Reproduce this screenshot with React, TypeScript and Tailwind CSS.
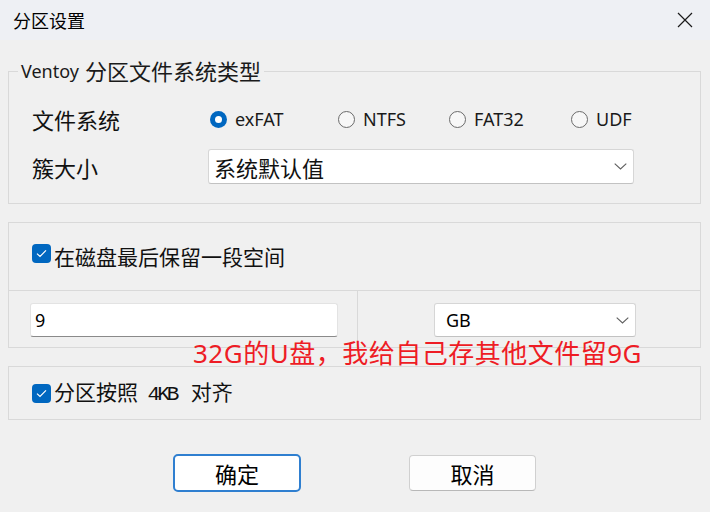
import React from "react";

function Chevron() {
  return (
    <svg width="13" height="7" viewBox="0 0 13 7" fill="none">
      <path d="M0.7 0.7L6.5 6L12.3 0.7" stroke="#5f5f5f" strokeWidth="1.1" />
    </svg>
  );
}

function Radio({ checked, label, w }: { checked?: boolean; label: string; w: string }) {
  return (
    <div className={`flex items-center ${w}`}>
      {checked ? (
        <span className="w-[17px] h-[17px] rounded-full bg-[#0067c0] flex items-center justify-center">
          <span className="w-[7px] h-[7px] rounded-full bg-white" />
        </span>
      ) : (
        <span className="w-[17px] h-[17px] rounded-full border border-[#6b6b6b] bg-[#f7f7f7]" />
      )}
      <span className="ml-[8px] text-[18px] leading-none text-[#1a1a1a] font-['Noto_Sans',sans-serif]">
        {label}
      </span>
    </div>
  );
}

function Check() {
  return (
    <span className="w-[19px] h-[19px] rounded-[4px] bg-[#0067c0] flex items-center justify-center shrink-0">
      <svg width="11" height="9" viewBox="0 0 11 9" fill="none">
        <path d="M1 4.6L4 7.5L10 1.3" stroke="#ffffff" strokeWidth="1.2" />
      </svg>
    </span>
  );
}

export default function App() {
  return (
    <div className="relative w-[710px] h-[512px] bg-[#f0f0f0] overflow-hidden font-['Noto_Sans_CJK_SC',sans-serif] text-[#111]">
      {/* Title bar */}
      <div className="h-[40px] bg-[#eef0f4] flex items-center justify-between pl-[13px] pr-[17px]">
        <span className="text-[18px] leading-none text-black">分区设置</span>
        <svg width="16" height="16" viewBox="0 0 16 16" fill="none">
          <path d="M1 1L15 15M15 1L1 15" stroke="#1a1a1a" strokeWidth="1.2" />
        </svg>
      </div>

      <div className="pl-[8px] pr-[9px]">
        {/* Group 1 */}
        <fieldset className="mt-[19px] border border-[#d9d9d9] p-0 m-0">
          <legend className="ml-[9px] px-[3px] h-[24px] flex items-center text-[22px] leading-none text-[#1a1a1a] font-['Noto_Sans','Noto_Sans_CJK_SC',sans-serif]">
            <span className="text-[18px] leading-none">Ventoy</span>
            <span className="ml-[6px] leading-none">分区文件系统类型</span>
          </legend>
          <div className="pt-[18px] pb-[19px]">
            <div className="flex items-center h-[36px] pl-[23px]">
              <span className="w-[178px] text-[22px] leading-none">文件系统</span>
              <Radio checked label="exFAT" w="w-[128px]" />
              <Radio label="NTFS" w="w-[111px]" />
              <Radio label="FAT32" w="w-[122px]" />
              <Radio label="UDF" w="w-[80px]" />
            </div>
            <div className="flex items-center mt-[12px] pl-[23px]">
              <span className="w-[176px] text-[22px] leading-none">簇大小</span>
              <div className="w-[426px] h-[35px] bg-white border border-[#d6d6d6] border-b-[#c2c2c2] rounded-[3px] flex items-center justify-between pl-[5px] pr-[6px]">
                <span className="text-[22px] leading-none">系统默认值</span>
                <Chevron />
              </div>
            </div>
          </div>
        </fieldset>

        {/* Group 2 */}
        <div className="mt-[18px] border border-[#d9d9d9]">
          <div className="h-[67px] pt-[19px] pl-[23px]">
            <div className="flex items-center h-[28px]">
              <span className="mb-[6px]">
                <Check />
              </span>
              <span className="ml-[3px] text-[21px] leading-none">在磁盘最后保留一段空间</span>
            </div>
          </div>
          <div className="flex border-t border-[#d9d9d9] h-[57px]">
            <div className="w-[349px] border-r border-[#d9d9d9] pl-[21px] pt-[12px]">
              <div className="w-[308px] h-[34px] bg-white border border-[#e3e3e3] border-b-[#8a8a8a] rounded-[3px] flex items-center pl-[4px]">
                <span className="text-[18px] leading-none font-['Noto_Sans',sans-serif] text-black">9</span>
              </div>
            </div>
            <div className="pl-[76px] pt-[12px]">
              <div className="w-[202px] h-[34px] bg-white border border-[#d6d6d6] border-b-[#c2c2c2] rounded-[3px] flex items-center justify-between pl-[11px] pr-[6px]">
                <span className="text-[18px] leading-none font-['Noto_Sans',sans-serif] text-black">GB</span>
                <Chevron />
              </div>
            </div>
          </div>
        </div>

        {/* Group 3 */}
        <div className="mt-[18px] border border-[#d9d9d9] h-[54px] flex items-center pl-[23px]">
          <Check />
          <span className="ml-[3px] text-[21px] leading-none whitespace-pre">
            分区按照<span className="font-['Liberation_Mono',monospace] text-[21px] tracking-[-3px]"> 4KB </span> 对齐
          </span>
        </div>

        {/* Buttons */}
        <div className="mt-[34px] flex items-center h-[38px] pl-[165px]">
          <button className="w-[128px] h-[38px] bg-white border-2 border-[#2f7fd0] rounded-[5px] text-[22px] leading-none text-black">
            确定
          </button>
          <button className="ml-[108px] w-[127px] h-[36px] bg-[#fdfdfd] border border-[#d0d0d0] border-b-[#b8b8b8] rounded-[4px] text-[22px] leading-none text-black">
            取消
          </button>
        </div>
      </div>

      {/* Annotation */}
      <div className="absolute left-[193px] top-[340px] text-[26px] leading-[26px] tracking-[0.5px] text-[#ee1c25] whitespace-nowrap font-['Noto_Sans','Noto_Sans_CJK_SC',sans-serif]">
        32G的U盘，我给自己存其他文件留9G
      </div>
    </div>
  );
}
